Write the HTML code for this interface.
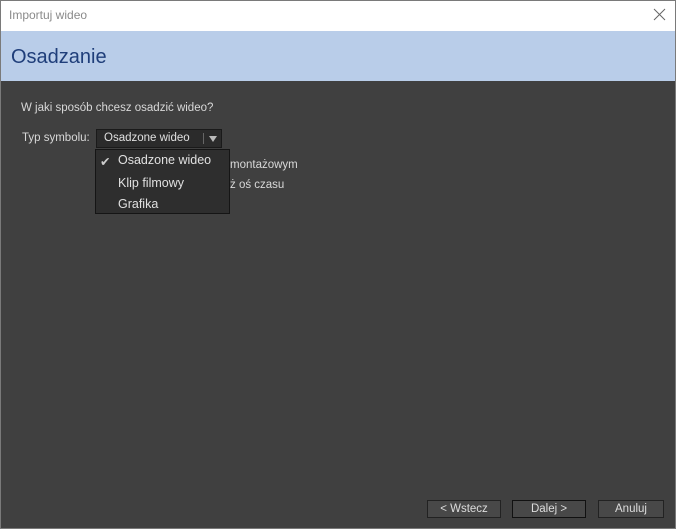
<!DOCTYPE html>
<html style="background:#404040"><head><style>
*{margin:0;padding:0;box-sizing:border-box}
body{width:676px;height:529px;overflow:hidden;background:#404040;font-family:"Liberation Sans",sans-serif;position:relative}
.win{position:absolute;left:0;top:0;width:676px;height:529px;border:1px solid #7a7a7a;}
.title{position:absolute;left:1px;top:1px;width:674px;height:30px;background:#fff;color:#8a8a8a;font-size:12px;line-height:29px;padding-left:8px}
.close{position:absolute;left:653px;top:8px;width:13px;height:13px}
.head{position:absolute;left:1px;top:31px;width:674px;height:50px;background:#b9cde9;color:#1f3e7a;font-size:20px;line-height:52px;padding-left:10px}
.t{position:absolute;color:#d8d8d8;font-size:11.5px;white-space:nowrap}
.combo{position:absolute;left:96px;top:129px;width:126px;height:19px;background:#2b2b2b;border:1px solid #1a1a1a;color:#e0e0e0;font-size:11.5px;line-height:17px;padding-left:7px}
.combo .sep{position:absolute;left:106px;top:3px;width:1px;height:11px;background:#666}
.combo .arr{position:absolute;left:112px;top:6px;border-left:4px solid transparent;border-right:4px solid transparent;border-top:6px solid #bbb}
.menu{position:absolute;left:95px;top:149px;width:135px;height:65px;background:#2e2e2e;border:1px solid #151515}
.mi{position:absolute;left:22px;color:#e0e0e0;font-size:12.5px}
.btn{position:absolute;top:500px;height:18px;background:#484848;border:1px solid #222;color:#dcdcdc;font-size:11.5px;text-align:center;line-height:16px}
</style></head><body>
<div class="win"></div>
<div class="title">Importuj wideo</div>
<svg class="close" viewBox="0 0 13 13"><path d="M1 1L12 12M12 1L1 12" stroke="#666" stroke-width="1"/></svg>
<div class="head">Osadzanie</div>
<div class="t" style="left:21px;top:102px">W jaki sposób chcesz osadzić wideo?</div>
<div class="t" style="left:22px;top:132px">Typ symbolu:</div>
<div class="t" style="left:230px;top:159px">montażowym</div>
<div class="t" style="left:230px;top:179px">ż oś czasu</div>
<div class="combo">Osadzone wideo<div class="sep"></div><div class="arr"></div></div>
<div class="menu">
<div class="mi" style="left:4px;top:4px;color:#ccc">✔</div>
<div class="mi" style="top:3px">Osadzone wideo</div>
<div class="mi" style="top:26px">Klip filmowy</div>
<div class="mi" style="top:47px">Grafika</div>
</div>
<div class="btn" style="left:427px;width:74px">&lt; Wstecz</div>
<div class="btn" style="left:512px;width:74px;border-color:#111">Dalej &gt;</div>
<div class="btn" style="left:598px;width:66px">Anuluj</div>
</body></html>
